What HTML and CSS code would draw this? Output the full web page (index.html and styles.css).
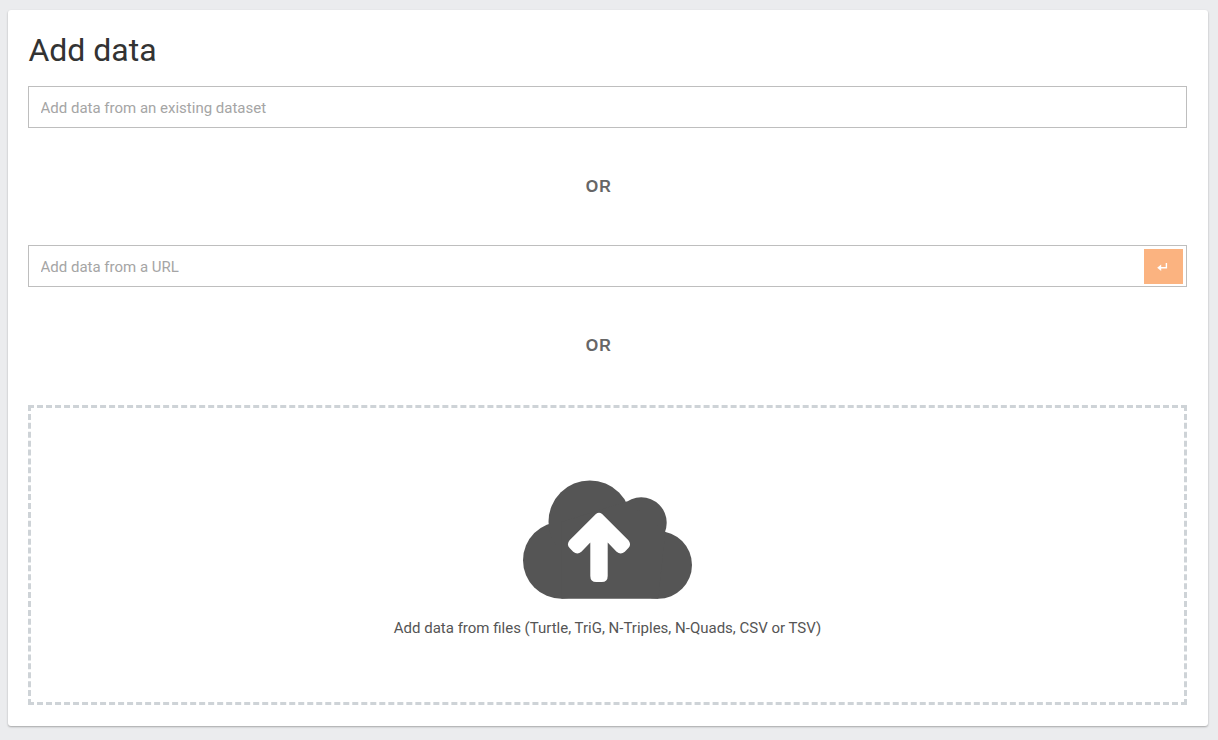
FILE: index.html
```html
<!DOCTYPE html>
<html lang="en">
<head>
<meta charset="utf-8">
<title>Add data</title>
<link rel="stylesheet" href="styles.css">
</head>
<body>
<main class="card">
  <h1 class="title">Add data</h1>
  <div class="field"><input class="input" type="text" placeholder="Add data from an existing dataset"></div>
  <div class="divider">OR</div>
  <div class="field">
    <input class="input" type="text" placeholder="Add data from a URL">
    <button class="submit" aria-label="Add"><svg class="enter" width="11" height="10" viewBox="0 0 11 10"><path d="M9.4 1v4.7H2" fill="none" stroke="currentColor" stroke-width="1.4"/><path d="M.2 5.7L4.2 2.5v6.4z" fill="currentColor"/></svg></button>
  </div>
  <div class="divider">OR</div>
  <section class="dropzone">
    <svg class="cloud" width="170" height="119" viewBox="0 0 170 119"><g fill="currentColor"><circle cx="38.5" cy="80.2" r="38.5"/><circle cx="66.8" cy="41.7" r="41.3"/><circle cx="118.2" cy="42.7" r="25.5"/><circle cx="135.2" cy="84.9" r="33.8"/><path d="M38.5 42L104 21.4l38.3 30.3-7.1 67H38.5z"/></g><path fill="#fff" d="M72.9 34.1Q76 31.3 79.1 34.1L105.4 60.2Q108.8 64.3 105.4 68L101.8 71.7Q97.7 75.3 93.6 71.7L84.7 62.5V96Q84.7 102 78.7 102H73.3Q67.3 102 67.3 96V62.5L58.4 71.7Q54.3 75.3 50.2 71.7L46.6 68Q43.2 64.3 46.6 60.2Z"/></svg>
    <p class="caption">Add data from files (Turtle, TriG, N-Triples, N-Quads, CSV or TSV)</p>
  </section>
</main>
</body>
</html>
```

FILE: styles.css
```css
* { box-sizing: border-box; }
body { margin: 0; padding: 10px 10px 14px 8px; height: 740px; background: #ebecee; font-family: Roboto, sans-serif; color: #555; }
.card { height: 716px; padding: 20px 21px 21px 20px; background: #fff; border-radius: 3px; box-shadow: 0 1px 2px rgba(0,0,0,.3); }
.title { margin: 0 0 16px; padding-left: .4px; font-size: 32px; line-height: 40px; font-weight: 400; color: #333; }
.field { display: flex; align-items: center; height: 42px; padding: 0 3px 0 11.5px; border: 1px solid #bebebe; }
.input { flex: 1; min-width: 0; padding: 2px 0 0; border: 0; outline: 0; background: none; font: 15px Roboto, sans-serif; }
.input::placeholder { color: #a5a5a5; }
.submit { display: flex; align-items: center; justify-content: center; width: 39px; height: 35px; padding: 0; border: 0; background: #fbb380; color: #fff; }
.enter { margin: 2px 2px 0 0; }
.divider { height: 117px; padding-right: 17.5px; text-align: center; font: 700 16px/117px "Liberation Sans", Arial, sans-serif; letter-spacing: 1px; color: #666; }
.dropzone { display: flex; flex-direction: column; align-items: center; height: 300px; margin-top: 1px; padding-top: 72px; border: 3px dashed #ced3d7; }
.cloud { display: block; color: #555; }
.caption { margin: 19px 0 0; font-size: 15px; line-height: 20px; }
```
